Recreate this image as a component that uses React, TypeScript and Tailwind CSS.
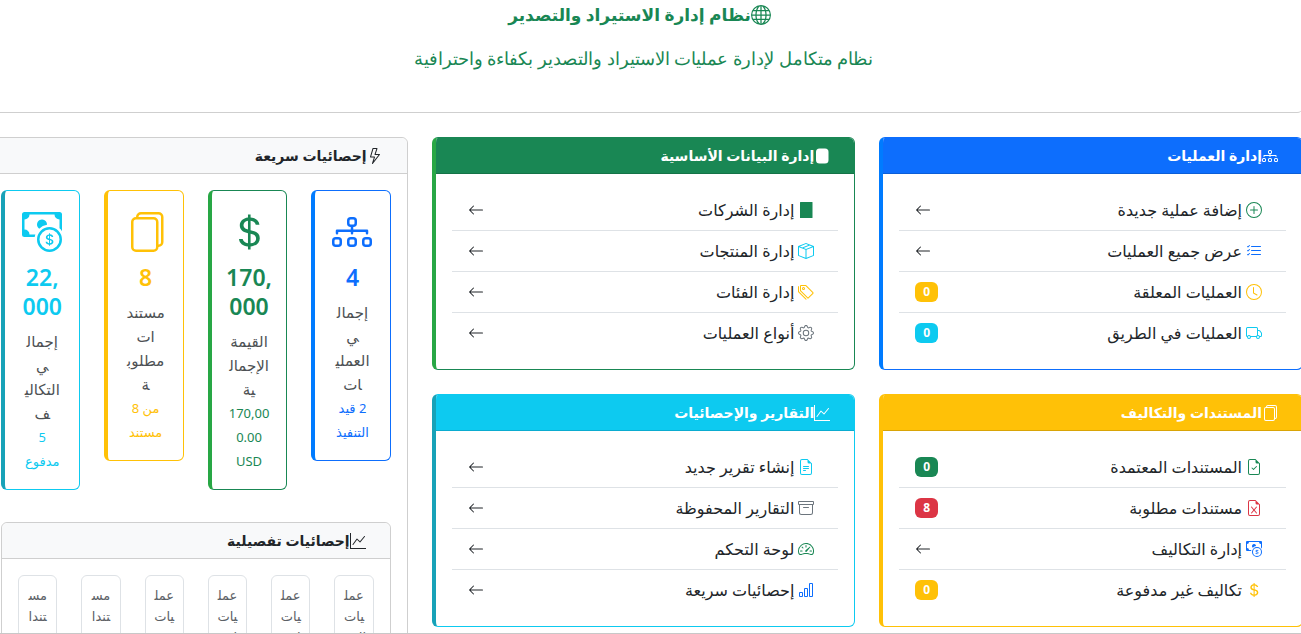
import { Fragment } from "react";
import type { IconType } from "react-icons";
import {
  BsArchive, BsArrowLeft, BsBarChart, BsBoxSeam, BsCashCoin, BsClock, BsCurrencyDollar,
  BsDiagram3, BsFileEarmarkCheck, BsFileEarmarkExcel, BsFileEarmarkText, BsFiles, BsGear,
  BsGlobe, BsGraphUp, BsLightning, BsListCheck, BsPlusCircle, BsSpeedometer2, BsTags, BsTruck,
} from "react-icons/bs";

const J = "\u200d";

const DatabaseBlock: IconType = ({ className }) => (
  <svg viewBox="0 0 16 16" className={className} width="1em" height="1em" fill="currentColor">
    <rect x="2" y="0.5" width="12.5" height="15" rx="3.5" />
  </svg>
);

const BuildingBlock: IconType = ({ className }) => (
  <svg viewBox="0 0 16 16" className={className} width="1em" height="1em" fill="currentColor">
    <rect x="2" y="0" width="12.5" height="16" rx="0.5" />
  </svg>
);

type Item = { icon: IconType; color: string; label: string; badge?: string; badgeColor?: string };
type Section = { title: string; icon: IconType; card: string; header: string; items: Item[] };

const sections: Section[] = [
  {
    title: "إدارة العمليات", icon: BsDiagram3,
    card: "border-[#0d6efd] border-l-[#007bff]", header: "bg-[#0d6efd] border-[#0b5ed7]",
    items: [
      { icon: BsPlusCircle, color: "text-[#198754]", label: "إضافة عملية جديدة" },
      { icon: BsListCheck, color: "text-[#0d6efd]", label: "عرض جميع العمليات" },
      { icon: BsClock, color: "text-[#ffc107]", label: "العمليات المعلقة", badge: "0", badgeColor: "bg-[#ffc107]" },
      { icon: BsTruck, color: "text-[#0dcaf0]", label: "العمليات في الطريق", badge: "0", badgeColor: "bg-[#0dcaf0]" },
    ],
  },
  {
    title: "إدارة البيانات الأساسية", icon: DatabaseBlock,
    card: "border-[#198754] border-l-[#28a745]", header: "bg-[#198754] border-[#157347]",
    items: [
      { icon: BuildingBlock, color: "text-[#198754]", label: "إدارة الشركات" },
      { icon: BsBoxSeam, color: "text-[#0dcaf0]", label: "إدارة المنتجات" },
      { icon: BsTags, color: "text-[#ffc107]", label: "إدارة الفئات" },
      { icon: BsGear, color: "text-[#6c757d]", label: "أنواع العمليات" },
    ],
  },
  {
    title: "المستندات والتكاليف", icon: BsFiles,
    card: "border-[#ffc107]", header: "bg-[#ffc107] border-[#d9a406]",
    items: [
      { icon: BsFileEarmarkCheck, color: "text-[#198754]", label: "المستندات المعتمدة", badge: "0", badgeColor: "bg-[#198754]" },
      { icon: BsFileEarmarkExcel, color: "text-[#dc3545]", label: "مستندات مطلوبة", badge: "8", badgeColor: "bg-[#dc3545]" },
      { icon: BsCashCoin, color: "text-[#0d6efd]", label: "إدارة التكاليف" },
      { icon: BsCurrencyDollar, color: "text-[#ffc107]", label: "تكاليف غير مدفوعة", badge: "0", badgeColor: "bg-[#ffc107]" },
    ],
  },
  {
    title: "التقارير والإحصائيات", icon: BsGraphUp,
    card: "border-[#0dcaf0] border-l-[#17a2b8]", header: "bg-[#0dcaf0] border-[#0bacd0]",
    items: [
      { icon: BsFileEarmarkText, color: "text-[#0dcaf0]", label: "إنشاء تقرير جديد" },
      { icon: BsArchive, color: "text-[#6c757d]", label: "التقارير المحفوظة" },
      { icon: BsSpeedometer2, color: "text-[#198754]", label: "لوحة التحكم" },
      { icon: BsBarChart, color: "text-[#0d6efd]", label: "إحصائيات سريعة" },
    ],
  },
];

const stats = [
  { icon: BsDiagram3, card: "border-[#0d6efd] border-l-[#007bff]", color: "text-[#0d6efd]", value: ["4"], label: ["إجمال" + J, J + "ي", "العملي" + J, J + "ات"], note: ["2 قيد", "التنفيذ"] },
  { icon: BsCurrencyDollar, card: "border-[#198754] border-l-[#28a745]", color: "text-[#198754]", value: ["170,", "000"], label: ["القيمة", "الإجمال" + J, J + "ية"], note: ["170,00", "0.00", "USD"] },
  { icon: BsFiles, card: "border-[#ffc107]", color: "text-[#ffc107]", value: ["8"], label: ["مستند", "ات", "مطلوب" + J, J + "ة"], note: ["من 8", "مستند"] },
  { icon: BsCashCoin, card: "border-[#0dcaf0] border-l-[#17a2b8]", color: "text-[#0dcaf0]", value: ["22,", "000"], label: ["إجمال" + J, J + "ي", "التكالي" + J, J + "ف"], note: ["5", "مدفوع"] },
];

const details = [
  ["عمل" + J, J + "يات", "الش"],
  ["عمل" + J, J + "يات", "اس"],
  ["عمل" + J, J + "يات", "اس"],
  ["عمل" + J, J + "يات", "تص"],
  ["مس" + J, J + "تندا", "ت"],
  ["مس" + J, J + "تندا", "ت"],
];

function Lines({ parts }: { parts: string[] }) {
  return (
    <>
      {parts.map((part, i) => (
        <Fragment key={i}>
          {i > 0 && <br />}
          {part}
        </Fragment>
      ))}
    </>
  );
}

function CardTitle({ icon: Icon, title }: { icon: IconType; title: string }) {
  return (
    <h5 className="flex items-center text-[14px] leading-[19px] font-semibold whitespace-nowrap">
      <Icon className="mr-2 shrink-0 text-[16px]" />
      {title}
    </h5>
  );
}

function SectionCard({ section }: { section: Section }) {
  return (
    <section className={`overflow-hidden rounded-md border border-l-4 bg-white ${section.card}`}>
      <header className={`border-b px-4 py-2 text-white ${section.header}`}>
        <CardTitle icon={section.icon} title={section.title} />
      </header>
      <ul className="p-4">
        {section.items.map(({ icon: Icon, color, label, badge, badgeColor }) => (
          <li key={label} className="border-b border-[#dee2e6] last:border-b-0">
            <a href="#" className="flex items-center justify-between px-4 py-2">
              <span className="flex items-center gap-1 text-[16px] leading-6 whitespace-nowrap">
                <Icon className={`mr-2 shrink-0 text-[16px] ${color}`} />
                {label}
              </span>
              {badge ? (
                <span className={`rounded-md px-2 text-[12px] leading-5 font-bold text-white ${badgeColor}`}>{badge}</span>
              ) : (
                <BsArrowLeft className="text-[16px]" />
              )}
            </a>
          </li>
        ))}
      </ul>
    </section>
  );
}

export default function App() {
  return (
    <div dir="rtl" className="h-screen overflow-hidden border-b border-[#c8c8c8] bg-white font-['Noto_Sans','DejaVu_Sans',sans-serif] text-[#212529]">
      <div className="-mr-0.5 -ml-4">
        <header className="mb-6 rounded-b-md border-b border-[#cfcfcf] pt-[3px] pb-[39px] text-center text-[#198754]">
          <h1 className="mb-4 flex items-center justify-center text-[17px] leading-6 font-semibold">
            <BsGlobe className="mr-2 shrink-0 text-[20px]" />
            نظام إدارة الاستيراد والتصدير
          </h1>
          <p className="text-[18px] leading-[30px] font-light">نظام متكامل لإدارة عمليات الاستيراد والتصدير بكفاءة واحترافية</p>
        </header>

        <main className="grid grid-cols-3 items-start gap-6">
          <div className="col-span-2 grid grid-cols-2 gap-6">
            {sections.map((section) => (
              <SectionCard key={section.title} section={section} />
            ))}
          </div>

          <section className="rounded-md border border-[#cfcfcf] bg-white">
            <header className="rounded-t-md border-b border-[#cfcfcf] bg-[#f8f9fa] px-4 py-2">
              <CardTitle icon={BsLightning} title="إحصائيات سريعة" />
            </header>
            <div className="p-4">
              <div className="mb-8 grid grid-cols-4 items-start gap-6">
                {stats.map(({ icon: Icon, card, color, value, label, note }, i) => (
                  <article key={i} className={`flex flex-col items-center rounded-md border border-l-4 py-4 text-center whitespace-nowrap ${card}`}>
                    <div className={`mb-1.5 flex h-[50px] items-center text-[40px] ${color}`}>
                      <Icon />
                    </div>
                    <h3 dir="ltr" className={`mb-2 text-[23px] leading-[29px] font-semibold ${color}`}><Lines parts={value} /></h3>
                    <p className="text-[15px] leading-6 text-[#4d5154]"><Lines parts={label} /></p>
                    <small className={`text-[13px] leading-6 ${color}`}><Lines parts={note} /></small>
                  </article>
                ))}
              </div>

              <section className="rounded-md border border-[#cfcfcf]">
                <header className="rounded-t-md border-b border-[#cfcfcf] bg-[#f8f9fa] px-4 py-2">
                  <CardTitle icon={BsGraphUp} title="إحصائيات تفصيلية" />
                </header>
                <div className="grid grid-cols-6 gap-6 p-4">
                  {details.map((parts, i) => (
                    <div key={i} className="flex justify-center rounded-md border border-[#dee2e6] py-[9px] text-center text-[13px] leading-[21px] whitespace-nowrap text-[#5c6166]">
                      <p><Lines parts={parts} /></p>
                    </div>
                  ))}
                </div>
              </section>
            </div>
          </section>
        </main>
      </div>
    </div>
  );
}
